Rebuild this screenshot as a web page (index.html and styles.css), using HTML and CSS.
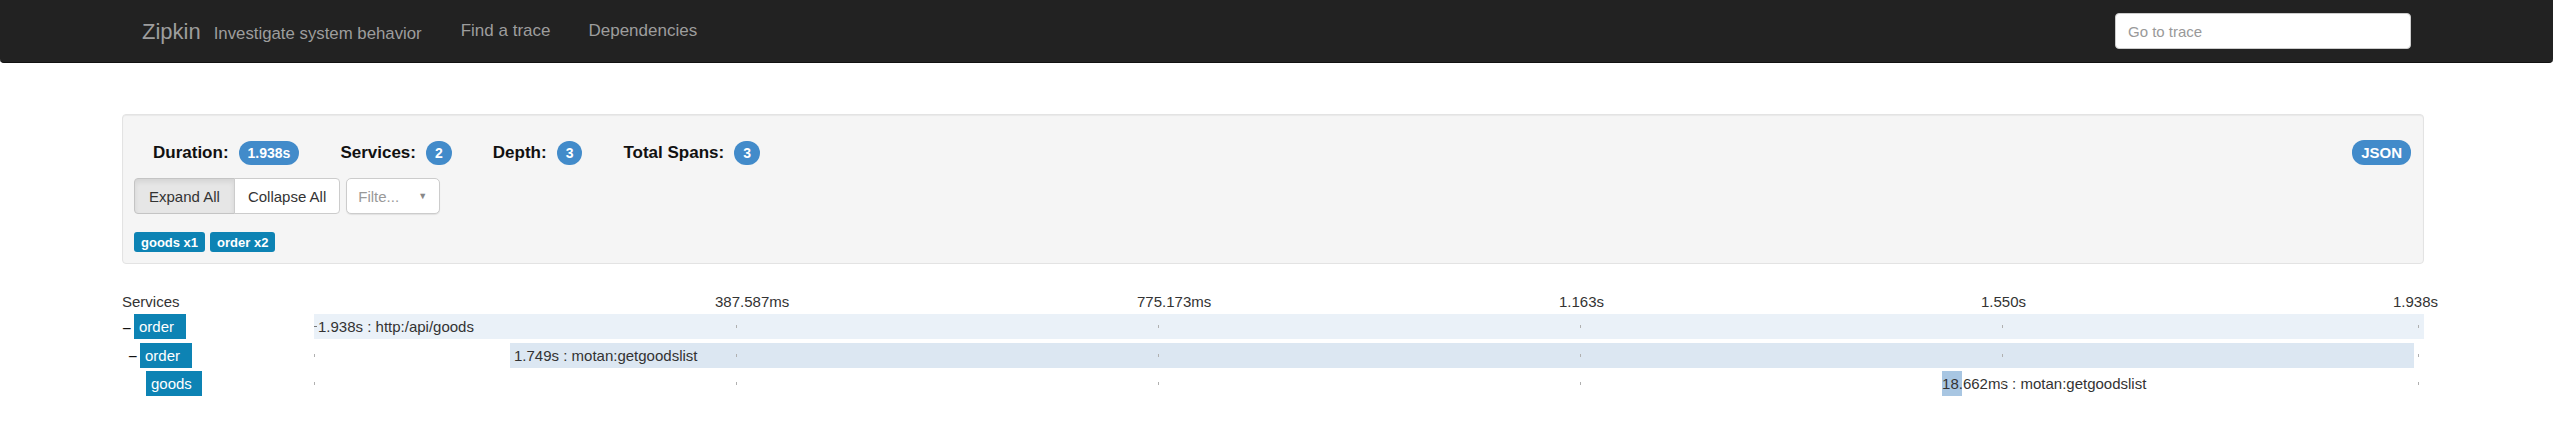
FILE: index.html
```html
<!DOCTYPE html>
<html lang="en">
<head>
<meta charset="utf-8">
<title>Zipkin - Trace</title>
<link rel="stylesheet" href="styles.css">
</head>
<body>
<nav class="navbar">
  <div class="nav-inner">
    <div class="brand-group">
      <a class="brand" href="#">Zipkin</a>
      <span class="tagline">Investigate system behavior</span>
    </div>
    <a class="nav-link first" href="#">Find a trace</a>
    <a class="nav-link" href="#">Dependencies</a>
    <input class="goto" type="text" placeholder="Go to trace">
  </div>
</nav>

<main class="container">
  <section class="panel">
    <div class="stats">
      <div class="stat"><span class="stat-name">Duration:</span><span class="badge">1.938s</span></div>
      <div class="stat"><span class="stat-name">Services:</span><span class="badge">2</span></div>
      <div class="stat"><span class="stat-name">Depth:</span><span class="badge">3</span></div>
      <div class="stat"><span class="stat-name">Total Spans:</span><span class="badge">3</span></div>
      <span class="badge json">JSON</span>
    </div>
    <div class="controls">
      <div class="btn-group">
        <button class="btn active" type="button">Expand All</button>
        <button class="btn" type="button">Collapse All</button>
      </div>
      <div class="filter"><span class="filter-text">Filte...</span><span class="caret">▼</span></div>
    </div>
    <div class="svc-tags">
      <span class="tag">goods x1</span>
      <span class="tag">order x2</span>
    </div>
  </section>

  <section class="timeline">
    <div class="tl-header">
      <div class="svc-col">Services</div>
      <div class="tl-axis">
        <span class="tick-label" style="left:20%">387.587ms</span>
        <span class="tick-label" style="left:40%">775.173ms</span>
        <span class="tick-label" style="left:60%">1.163s</span>
        <span class="tick-label" style="left:80%">1.550s</span>
        <span class="tick-label last" style="left:100%">1.938s</span>
      </div>
    </div>

    <div class="tl-row">
      <div class="svc-col depth-0"><span class="toggle">−</span><span class="svc">order</span></div>
      <div class="tl-axis">
        <div class="bar level-1" style="left:0%;width:100%">1.938s : http:/api/goods</div>
        <i class="tick start" style="left:0%"></i><i class="tick" style="left:20%"></i><i class="tick" style="left:40%"></i><i class="tick" style="left:60%"></i><i class="tick" style="left:80%"></i><i class="tick end" style="left:100%"></i>
      </div>
    </div>

    <div class="tl-row">
      <div class="svc-col depth-1"><span class="toggle">−</span><span class="svc">order</span></div>
      <div class="tl-axis">
        <div class="bar level-2" style="left:9.29%;width:90.25%">1.749s : motan:getgoodslist</div>
        <i class="tick" style="left:0%"></i><i class="tick" style="left:20%"></i><i class="tick" style="left:40%"></i><i class="tick" style="left:60%"></i><i class="tick" style="left:80%"></i><i class="tick end" style="left:100%"></i>
      </div>
    </div>

    <div class="tl-row">
      <div class="svc-col depth-2"><span class="toggle"></span><span class="svc">goods</span></div>
      <div class="tl-axis">
        <div class="bar level-3" style="left:77.16%;width:0.96%"><span class="bar-text">18.662ms : motan:getgoodslist</span></div>
        <i class="tick" style="left:0%"></i><i class="tick" style="left:20%"></i><i class="tick" style="left:40%"></i><i class="tick" style="left:60%"></i><i class="tick" style="left:80%"></i><i class="tick end" style="left:100%"></i>
      </div>
    </div>
  </section>
</main>
</body>
</html>
```

FILE: styles.css
```css
* { box-sizing: border-box; }

body {
  margin: 0;
  background: #fff;
  color: #333;
  font-family: "Liberation Sans", Arial, sans-serif;
  font-size: 15px;
}

/* ---------- navbar ---------- */
.navbar {
  height: 63px;
  background: #222;
  border-bottom: 1px solid #111;
  border-radius: 0 0 4px 4px;
}
.nav-inner {
  margin-left: 122px;
  width: 2302px;
  height: 62px;
  display: flex;
  align-items: center;
}
.brand-group {
  display: flex;
  align-items: baseline;
  margin-left: 20px;
  padding-top: 2px;
}
.brand {
  color: #9d9d9d;
  font-size: 22px;
  text-decoration: none;
}
.tagline {
  color: #9d9d9d;
  font-size: 16.8px;
  margin-left: 13px;
}
.nav-link {
  color: #9d9d9d;
  font-size: 17px;
  text-decoration: none;
  margin-left: 38px;
  margin-top: -1px;
}
.nav-link.first { margin-left: 39px; }
.goto {
  margin-left: auto;
  margin-right: 13px;
  width: 296px;
  height: 36px;
  border: 1px solid #ccc;
  border-radius: 4px;
  background: #fff;
  padding: 0 12px;
  font-family: "Liberation Sans", Arial, sans-serif;
  font-size: 15px;
  color: #555;
}
.goto::placeholder { color: #999; }

/* ---------- container ---------- */
.container {
  margin-left: 122px;
  width: 2302px;
}

/* ---------- summary panel ---------- */
.panel {
  margin-top: 51px;
  background: #f5f5f5;
  border: 1px solid #e3e3e3;
  border-radius: 4px;
  padding: 25px 12px 11px 11px;
  box-shadow: inset 0 1px 1px rgba(0,0,0,.05);
}
.stats {
  display: flex;
  align-items: center;
  height: 25px;
  padding-left: 19px;
}
.stat {
  display: flex;
  align-items: center;
  margin-right: 41px;
}
.stat-name {
  font-weight: bold;
  font-size: 17px;
  color: #111;
  margin-right: 10px;
}
.badge {
  display: inline-flex;
  align-items: center;
  justify-content: center;
  height: 24px;
  min-width: 24px;
  padding: 0 9px;
  border-radius: 12px;
  background: #428bca;
  color: #fff;
  font-weight: bold;
  font-size: 14px;
}
.badge.json {
  margin-left: auto;
  font-size: 15px;
  height: 25px;
  padding: 0 9px;
}

.controls {
  display: flex;
  margin-top: 13px;
}
.btn-group { display: flex; }
.btn {
  height: 36px;
  padding: 0 13px;
  font-family: "Liberation Sans", Arial, sans-serif;
  font-size: 15px;
  color: #333;
  background: #fff;
  border: 1px solid #ccc;
}
.btn:first-child { border-radius: 4px 0 0 4px; }
.btn:last-child { border-radius: 0 4px 4px 0; margin-left: -1px; }
.btn.active {
  background: #e6e6e6;
  border-color: #c4c4c4;
  box-shadow: inset 0 3px 5px rgba(0,0,0,.08);
  padding: 0 14px;
}
.filter {
  margin-left: 6px;
  width: 94px;
  height: 36px;
  background: #fff;
  border: 1px solid #ccc;
  border-radius: 5px;
  box-shadow: 0 1px 1px rgba(0,0,0,.08);
  display: flex;
  align-items: center;
  padding: 0 12px 0 11px;
}
.filter-text {
  color: #999;
  font-size: 15px;
}
.caret {
  margin-left: auto;
  color: #888;
  font-size: 9px;
}

.svc-tags {
  display: flex;
  gap: 5px;
  margin-top: 18px;
}
.tag {
  display: inline-flex;
  align-items: center;
  height: 20px;
  padding: 0 7px;
  border-radius: 3px;
  background: #0d83b4;
  color: #fff;
  font-weight: bold;
  font-size: 13px;
}

/* ---------- timeline ---------- */
.timeline {
  margin-top: 28px;
  display: flex;
  flex-direction: column;
  gap: 3.5px;
}
.tl-header {
  display: flex;
  height: 20px;
  line-height: 20px;
  margin-bottom: -1.5px;
}
.tl-header .svc-col { font-size: 15px; color: #333; }
.svc-col {
  flex: none;
  width: 192px;
  display: flex;
  align-items: center;
}
.tl-axis {
  position: relative;
  flex: 1;
}
.tick-label {
  position: absolute;
  top: 0;
  margin-left: -21px;
  white-space: nowrap;
  font-size: 15px;
  color: #333;
}
.tick-label.last { margin-left: -31px; }

.tl-row {
  display: flex;
  height: 25px;
}
.depth-1 { padding-left: 6px; }
.depth-2 { padding-left: 12px; }
.toggle {
  width: 12px;
  flex: none;
  font-size: 16px;
  color: #111;
  padding-top: 4px;
}
.svc {
  height: 25px;
  line-height: 25px;
  min-width: 52px;
  padding: 0 10px 0 5px;
  background: #0d83b4;
  color: #fff;
  font-size: 15px;
}

.bar {
  position: absolute;
  top: 0;
  height: 25px;
  line-height: 25px;
  padding-left: 3px;
  white-space: nowrap;
  font-size: 15px;
  color: #333;
}
.bar.level-1 { background: #eaf1f8; padding-left: 4px; }
.bar.level-2 { background: #dce7f2; padding-left: 4px; }
.bar.level-3 { background: #a8c6e2; padding-left: 0; overflow: visible; }
.bar-text { position: relative; }

.tick {
  position: absolute;
  top: 11px;
  width: 1px;
  height: 3px;
  background: #b0b0b0;
}
.tick.start { top: 12px; width: 3px; height: 1px; background: #777; }
.tick.end { margin-left: -6px; }
```
